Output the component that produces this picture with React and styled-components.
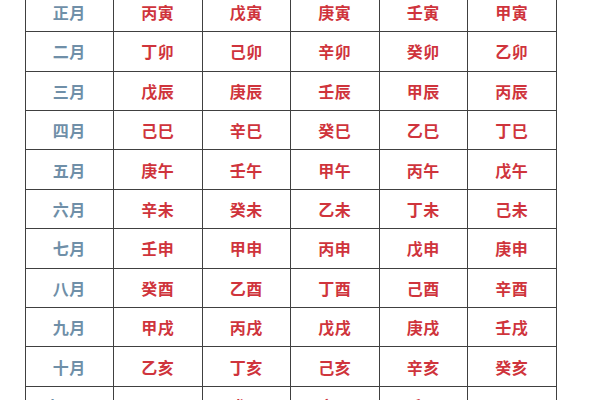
import React from "react";
import styled, { createGlobalStyle } from "styled-components";

const Global = createGlobalStyle`
  html, body { margin: 0; padding: 0; background: #ffffff; overflow: hidden; }
  body { width: 600px; height: 400px; }
`;

const Page = styled.div`
  width: 600px;
  height: 400px;
  overflow: hidden;
  background: #ffffff;
`;

const Table = styled.div`
  display: grid;
  grid-template-columns: repeat(6, 88.5px);
  grid-auto-rows: 39.4px;
  margin-left: 24.5px;
  margin-top: -8.1px;
  width: max-content;
  border-top: 1px solid #404040;
  border-left: 1px solid #404040;
`;

const Cell = styled.div`
  box-sizing: border-box;
  display: flex;
  align-items: center;
  justify-content: center;
  border-right: 1px solid #404040;
  border-bottom: 1px solid #404040;
  font-family: "Noto Sans CJK SC", "Noto Sans", sans-serif;
  font-size: 16px;
  font-weight: 700;
  letter-spacing: 0.5px;
  color: ${(p) => (p.$month ? "#6f8fa8" : "#cf343c")};
`;

const rows = [
  ["正月", "丙寅", "戊寅", "庚寅", "壬寅", "甲寅"],
  ["二月", "丁卯", "己卯", "辛卯", "癸卯", "乙卯"],
  ["三月", "戊辰", "庚辰", "壬辰", "甲辰", "丙辰"],
  ["四月", "己巳", "辛巳", "癸巳", "乙巳", "丁巳"],
  ["五月", "庚午", "壬午", "甲午", "丙午", "戊午"],
  ["六月", "辛未", "癸未", "乙未", "丁未", "己未"],
  ["七月", "壬申", "甲申", "丙申", "戊申", "庚申"],
  ["八月", "癸酉", "乙酉", "丁酉", "己酉", "辛酉"],
  ["九月", "甲戌", "丙戌", "戊戌", "庚戌", "壬戌"],
  ["十月", "乙亥", "丁亥", "己亥", "辛亥", "癸亥"],
  ["十一月", "丙子", "戊子", "庚子", "壬子", "甲子"],
  ["十二月", "丁丑", "己丑", "辛丑", "癸丑", "乙丑"],
];

export default function App() {
  return (
    <Page>
      <Global />
      <Table>
        {rows.map((r, i) =>
          r.map((t, j) => (
            <Cell key={`${i}-${j}`} $month={j === 0}>
              {t}
            </Cell>
          ))
        )}
      </Table>
    </Page>
  );
}
